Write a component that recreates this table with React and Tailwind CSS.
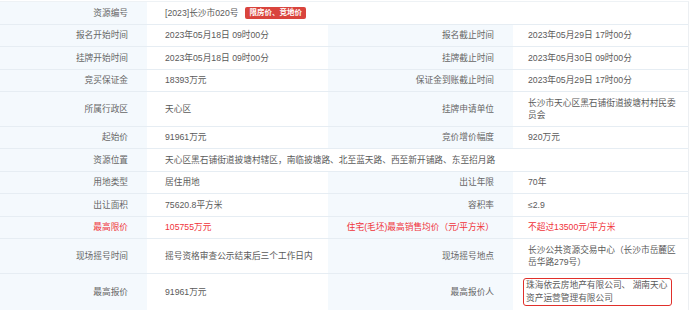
import React from "react";

const rows = [
  { type: "wide", label: "资源编号", value: "[2023]长沙市020号", badge: "限房价、竞地价" },
  { label: "报名开始时间", value: "2023年05月18日 09时00分", label2: "报名截止时间", value2: ["2023年05月29日 17时00分"] },
  { label: "挂牌开始时间", value: "2023年05月18日 09时00分", label2: "挂牌截止时间", value2: ["2023年05月30日 09时00分"] },
  { label: "竞买保证金", value: "18393万元", label2: "保证金到账截止时间", value2: ["2023年05月29日 17时00分"] },
  { label: "所属行政区", value: "天心区", label2: "挂牌申请单位", value2: ["长沙市天心区黑石铺街道披塘村村民委", "员会"] },
  { label: "起始价", value: "91961万元", label2: "竞价增价幅度", value2: ["920万元"] },
  { type: "wide", label: "资源位置", value: "天心区黑石铺街道披塘村辖区，南临披塘路、北至蓝天路、西至新开铺路、东至招月路" },
  { label: "用地类型", value: "居住用地", label2: "出让年限", value2: ["70年"] },
  { label: "出让面积", value: "75620.8平方米", label2: "容积率", value2: ["≤2.9"] },
  { red: true, label: "最高限价", value: "105755万元", label2: "住宅(毛坯)最高销售均价（元/平方米）", value2: ["不超过13500元/平方米"] },
  { label: "现场摇号时间", value: "摇号资格审查公示结束后三个工作日内", label2: "现场摇号地点", value2: ["长沙公共资源交易中心（长沙市岳麓区", "岳华路279号）"] },
  { label: "最高报价", value: "91961万元", label2: "最高报价人", value2: ["珠海依云房地产有限公司、 湖南天心", "资产运营管理有限公司"], boxed: true },
];

const Label = ({ children, red }) => (
  <div
    className={`flex items-center justify-end pl-[2px] pr-[19px] py-[4.75px] bg-[#f4f9fd] border-b border-[#e6edf3] text-right whitespace-nowrap ${
      red ? "text-[#f0333a]" : "text-[#666]"
    }`}
  >
    {children}
  </div>
);

const Value = ({ children, red, wide }) => (
  <div
    className={`flex items-center pl-[18px] pr-[2px] py-[4.75px] bg-white border-b border-[#e6edf3] whitespace-nowrap ${
      wide ? "col-span-3" : ""
    } ${red ? "text-[#f0333a]" : "text-[#5a5a5a]"}`}
  >
    {children}
  </div>
);

const Lines = ({ lines }) =>
  lines.map((l, i) => (
    <span key={i} className="block">
      {l}
    </span>
  ));

export default function App() {
  return (
    <div
      className="w-[692px] h-[310px] overflow-hidden bg-white text-[8.7px] leading-[12px]"
      style={{ fontFamily: '"Liberation Sans", "Noto Sans CJK SC", sans-serif' }}
    >
      <div className="grid grid-cols-[147px_181px_185px_175px] w-[689px] border-r border-[#eceff2] border-t border-t-[#eef2f5] mt-[1px]">
        {rows.map((r, i) =>
          r.type === "wide" ? (
            <React.Fragment key={i}>
              <Label>{r.label}</Label>
              <Value wide>
                <span>{r.value}</span>
                {r.badge && (
                  <span className="ml-[7px] px-[4px] h-[12px] leading-[12px] rounded-[2px] bg-[#d9443d] text-white text-[7.5px] font-bold">
                    {r.badge}
                  </span>
                )}
              </Value>
            </React.Fragment>
          ) : (
            <React.Fragment key={i}>
              <Label red={r.red}>{r.label}</Label>
              <Value red={r.red}>{r.value}</Value>
              <Label red={r.red}>{r.label2}</Label>
              <div
                className={`flex items-center pl-[10px] pr-[2px] bg-white border-b border-[#e6edf3] whitespace-nowrap ${
                  r.boxed ? "py-[4px]" : "py-[4.75px]"
                }`}
              >
                {r.boxed ? (
                  <div className="border-[1.5px] border-[#e0302b] rounded-[3px] pl-[2px] pr-[4px] leading-[13px] text-[#5a5a5a]">
                    <Lines lines={r.value2} />
                  </div>
                ) : (
                  <div className={`pl-[5px] ${r.red ? "text-[#f0333a]" : "text-[#5a5a5a]"}`}>
                    <Lines lines={r.value2} />
                  </div>
                )}
              </div>
            </React.Fragment>
          )
        )}
      </div>
    </div>
  );
}
